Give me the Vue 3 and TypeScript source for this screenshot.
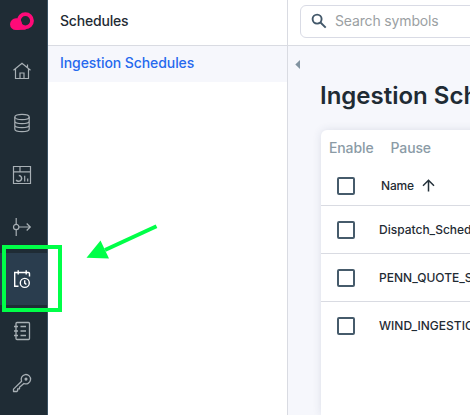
<script setup lang="ts">
import { ref } from 'vue'

interface NavItem {
  id: string
  label: string
}

const navItems: NavItem[] = [
  { id: 'home', label: 'Home' },
  { id: 'data', label: 'Data' },
  { id: 'dashboards', label: 'Dashboards' },
  { id: 'pipelines', label: 'Pipelines' },
  { id: 'schedules', label: 'Schedules' },
  { id: 'logs', label: 'Logs' },
  { id: 'keys', label: 'Keys' },
]
const active = ref('schedules')
const rows: string[] = ['Dispatch_Schedule', 'PENN_QUOTE_SCHEDULE', 'WIND_INGESTION']
</script>

<template>
  <div class="app">
    <nav class="rail">
      <div class="logo">
        <svg width="26" height="20" viewBox="0 0 26 20">
          <circle cx="16.4" cy="8.8" r="6.600" fill="none" stroke="#ff0a78" stroke-width="3.800" />
          <path d="M7.200 6.300c3.300 0 5.800 2.400 5.800 5.700 0 2.200-.5 3.700-1.600 4.700-.9.900-2.200 1.300-4.200 1.300A5.900 5.900 0 0 1 1 12.200a6 6 0 0 1 6.200-5.900z" fill="#ff0a78" />
          <path d="M7 12h5.500l4 4.500v1.200L7 18z" fill="#ff0a78" />
        </svg>
      </div>
      <button
        v-for="item in navItems"
        :key="item.id"
        class="nav-item"
        :class="{ active: item.id === active }"
        :aria-label="item.label"
        @click="active = item.id"
      >
        <svg width="20" height="20" viewBox="0 0 20 20" fill="none" stroke="currentColor" stroke-width="1.2">
          <g v-if="item.id === 'home'">
            <path d="M1.500 9.200 10 2.300l8.500 6.900M3.500 7.800V17.500h13V7.800M8 17.500v-5.500h4v5.500M15.500 6.200V3.500" />
          </g>
          <g v-else-if="item.id === 'data'">
            <ellipse cx="10" cy="4" rx="7.200" ry="2.600" />
            <path d="M2.800 4v12c0 1.400 3.200 2.600 7.200 2.600s7.200-1.200 7.200-2.600V4M2.800 8c0 1.400 3.200 2.600 7.200 2.600s7.200-1.200 7.200-2.600M2.800 12c0 1.400 3.200 2.600 7.200 2.600s7.200-1.200 7.200-2.600" />
          </g>
          <g v-else-if="item.id === 'dashboards'">
            <path d="M1.500 1.500h17v17h-17zM1.500 6.800h17M8 1.500v5.300M12.700 16.500v-5.700M15.700 16.500v-3" />
            <path d="M6.800 10.500a2.900 2.900 0 1 1-2.600 4.300" stroke-width="1.500" />
          </g>
          <g v-else-if="item.id === 'pipelines'">
            <circle cx="4.200" cy="10" r="2.700" />
            <path d="M4.200 1v6.300M4.200 12.700V19M7 10h11.200M14.700 6.500l3.600 3.500-3.600 3.500" />
          </g>
          <g v-else-if="item.id === 'schedules'" stroke-width="1.400">
            <path d="M6.500 17.300H2.700V3.500h13.800q1 0 1 1v3M6.200 1.300v4.200M14.200 1.300v4.200" />
            <circle cx="12.800" cy="13.900" r="4.500" />
            <path d="M12.700 11.200v2.900l1.700 1.500" />
          </g>
          <g v-else-if="item.id === 'logs'" stroke-width="1.300">
            <rect x="4" y="1.500" width="13.500" height="17" rx="1" />
            <path d="M2 5.500h4M2 10h4M2 14.500h4M8.500 5.500H14M8.500 10H14M8.500 14.500H14" />
          </g>
          <g v-else stroke-width="1.300">
            <path d="M9.600 8.200A4.700 4.700 0 1 1 11.900 10.500L7.500 14.300v1.500H5.600v1.900l-.8.800H1.500v-2.400z" stroke-linejoin="round" />
            <circle cx="14" cy="6.100" r=".9" fill="currentColor" />
          </g>
        </svg>
      </button>
    </nav>

    <aside class="panel">
      <header class="panel-head">Schedules</header>
      <a class="panel-link">Ingestion Schedules</a>
    </aside>

    <main class="main">
      <header class="topbar">
        <label class="search">
          <svg width="16" height="16" viewBox="0 0 16 16" fill="none" stroke="#43586a" stroke-width="1.900">
            <circle cx="6.100" cy="6.100" r="4.500" />
            <path d="m9.500 9.500 5.200 5.200" />
          </svg>
          <span>Search symbols</span>
        </label>
      </header>
      <section class="content">
        <svg class="collapse" width="5" height="9" viewBox="0 0 5 9"><path d="M5 0v9L.3 4.500z" fill="#8294a1" /></svg>
        <h1>Ingestion Schedules</h1>
        <div class="card">
          <div class="actions"><span>Enable</span><span>Pause</span></div>
          <div class="row head">
            <i class="box"></i>
            <span class="name">Name</span>
            <svg width="13" height="13" viewBox="0 0 13 13" fill="none" stroke="#24313a" stroke-width="1.500">
              <path d="M6.500 12.500V1.200M1 6.700l5.500-5.500L12 6.700" />
            </svg>
          </div>
          <div v-for="row in rows" :key="row" class="row">
            <i class="box"></i>
            <span class="cell">{{ row }}</span>
          </div>
        </div>
      </section>
    </main>

    <div class="highlight"></div>
    <svg class="pointer" width="80" height="45" viewBox="0 0 80 45">
      <path d="M75.500 6.200 24 30" stroke="#00ff48" stroke-width="4" />
      <path d="M5.500 37.700 19.500 20.500 28 38.500z" fill="#00ff48" />
    </svg>
  </div>
</template>

<style>
body {
  overflow: hidden;
}
</style>

<style scoped>
.app {
  position: relative;
  display: flex;
  width: 470px;
  height: 415px;
  overflow: hidden;
  background: #fff;
  color: #1f2b34;
  font-family: Inter, 'Liberation Sans', sans-serif;
}
.app * {
  box-sizing: border-box;
}
.rail {
  display: flex;
  flex-direction: column;
  flex: none;
  width: 48px;
  border-right: 1px solid #3b5263;
  background: #1f2c35;
}
.logo {
  flex: none;
  height: 45px;
  padding: 12px 0 0 9px;
}
.logo svg {
  display: block;
}
.nav-item {
  display: flex;
  align-items: center;
  flex: none;
  width: 47px;
  height: 52px;
  padding: 0 0 0 12px;
  border: 0;
  background: transparent;
  color: #a8b0b5;
}
.nav-item.active {
  background: #2a3d4e;
  color: #fff;
}
.panel {
  flex: none;
  width: 240px;
  border-right: 1px solid #d9dbe2;
}
.panel-head {
  height: 46px;
  padding: 0 12px;
  border-bottom: 1px solid #d9dbe2;
  font-size: 14px;
  font-weight: 500;
  line-height: 42px;
  letter-spacing: -0.2px;
}
.panel-link {
  display: block;
  height: 36px;
  padding: 0 12px;
  background: #f6f7fc;
  color: #2669ee;
  font-size: 14px;
  font-weight: 500;
  line-height: 34px;
  letter-spacing: -0.08px;
}
.main {
  display: flex;
  flex-direction: column;
  flex: 1;
  min-width: 0;
}
.topbar {
  flex: none;
  height: 46px;
  padding: 5px 0 0 12px;
  border-bottom: 1px solid #d9dbe2;
}
.search {
  display: flex;
  align-items: center;
  gap: 8px;
  width: 240px;
  height: 33px;
  padding: 0 0 2px 10px;
  border: 1px solid #d9dbe5;
  border-radius: 6px;
  color: #9b9fa3;
  font-size: 14px;
  letter-spacing: -0.15px;
}
.content {
  display: flex;
  flex-direction: column;
  flex: 1;
  padding: 14px 0 0 7px;
  background: #f6f7fc;
}
.collapse {
  display: block;
  flex: none;
}
h1 {
  flex: none;
  margin: 12px 0 0 25px;
  font-size: 24px;
  font-weight: 600;
  line-height: 30px;
  white-space: nowrap;
}
.card {
  flex: 1;
  width: 400px;
  margin: 19px 0 0 26px;
  border-radius: 6px 0 0;
  background: #fff;
  box-shadow: 0 0 9px rgba(50, 65, 100, 0.13);
}
.actions {
  display: flex;
  gap: 17px;
  height: 36px;
  padding-left: 8px;
  color: #8b9ba6;
  font-size: 14px;
  font-weight: 500;
  line-height: 36px;
  letter-spacing: -0.12px;
}
.row {
  display: flex;
  align-items: center;
  height: 48px;
  padding-left: 16px;
  border-bottom: 1px solid #d9dbe2;
}
.row.head {
  height: 40px;
}
.row:last-child {
  border-bottom-color: transparent;
}
.box {
  flex: none;
  width: 18px;
  height: 18px;
  border: 2px solid #465b6b;
  border-radius: 2px;
}
.name {
  margin: 0 8px 0 26px;
  font-size: 12px;
  font-weight: 500;
  letter-spacing: -0.15px;
}
.cell {
  margin-left: 24px;
  font-size: 12px;
  font-weight: 500;
  white-space: nowrap;
}
.highlight {
  position: absolute;
  left: 2px;
  top: 245px;
  width: 60px;
  height: 67px;
  border: 4px solid #00ff48;
}
.pointer {
  position: absolute;
  left: 81px;
  top: 220px;
}
</style>
